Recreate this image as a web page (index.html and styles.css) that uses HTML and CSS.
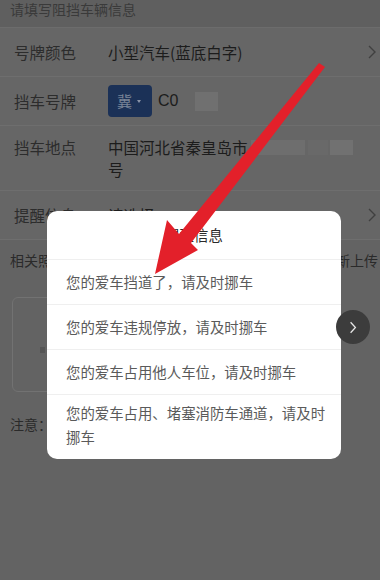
FILE: index.html
```html
<!DOCTYPE html>
<html lang="zh-CN">
<head>
<meta charset="utf-8">
<link rel="stylesheet" href="styles.css">
</head>
<body>
<div class="page">
  <div class="sec-head">请填写阻挡车辆信息</div>
  <div class="row">
    <span class="label">号牌颜色</span>
    <span class="value">小型汽车(蓝底白字)</span>
    <svg class="chev" viewBox="0 0 8 14" width="8" height="14"><path d="M1 1 L7 7 L1 13" fill="none" stroke="#404040" stroke-width="1.4"/></svg>
  </div>
  <div class="row">
    <span class="label">挡车号牌</span>
    <div class="value plate-line">
      <span class="plate">冀<i class="caret"></i></span>
      <span class="plate-no">C0</span>
      <span class="mask mask-a"></span>
    </div>
  </div>
  <div class="row row-tall">
    <span class="label">挡车地点</span>
    <div class="value addr">
      <div class="addr-line">中国河北省秦皇岛市<span class="mask mask-b"></span><span class="mask mask-c"></span><span class="mask mask-d"></span></div>
      <div>号</div>
    </div>
  </div>
  <div class="row">
    <span class="label">提醒信息</span>
    <span class="value">请选择</span>
    <svg class="chev" viewBox="0 0 8 14" width="8" height="14"><path d="M1 1 L7 7 L1 13" fill="none" stroke="#404040" stroke-width="1.4"/></svg>
  </div>
  <div class="photo-head"><span>相关照片</span><span>重新上传</span></div>
  <div class="photo-area">
    <div class="photo-box"><span class="plus"></span></div>
  </div>
  <div class="note">注意：</div>
</div>

<div class="modal">
  <div class="modal-title">提醒信息</div>
  <div class="opt">您的爱车挡道了，请及时挪车</div>
  <div class="opt">您的爱车违规停放，请及时挪车</div>
  <div class="opt">您的爱车占用他人车位，请及时挪车</div>
  <div class="opt opt-multi">您的爱车占用、堵塞消防车通道，请及时挪车</div>
</div>

<div class="next-btn">
  <svg viewBox="0 0 10 16" width="8" height="13"><path d="M2 1.5 L8 8 L2 14.5" fill="none" stroke="#e6e6e6" stroke-width="1.6"/></svg>
</div>

<svg class="arrow" viewBox="0 0 380 580" width="380" height="580">
  <polygon points="319,63 325,67 191,243 198,250 155,274 167,220 179,234" fill="#e3202a"/>
</svg>
</body>
</html>
```

FILE: styles.css
```css
html, body {
  margin: 0;
  padding: 0;
}
body {
  width: 380px;
  height: 580px;
  overflow: hidden;
  background: #636363;
  font-family: "Noto Sans CJK SC", "Noto Sans", sans-serif;
  position: relative;
}
.page {
  display: flex;
  flex-direction: column;
}
.sec-head {
  height: 27px;
  line-height: 18px;
  padding-left: 10px;
  font-size: 14px;
  color: #3a3a3a;
  background: #5f5f5f;
  border-bottom: 1px solid #6c6c6c;
}
.row {
  display: flex;
  align-items: center;
  height: 48px;
  padding: 0 2px 0 14px;
  background: #666666;
  border-bottom: 1px solid #6e6e6e;
  font-size: 15.5px;
}
.row-tall {
  align-items: flex-start;
  box-sizing: border-box;
  height: 65px;
  padding-top: 10px;
  padding-bottom: 10px;
}
.label {
  width: 94px;
  color: #2c2c2c;
  line-height: 22px;
}
.value {
  flex: 1;
  color: #1c1c1c;
  line-height: 22px;
}
.chev {
  flex: none;
  margin-right: 2px;
}
.plate-line {
  display: flex;
  align-items: center;
}
.plate {
  width: 44px;
  height: 32px;
  box-sizing: border-box;
  border-radius: 4px;
  background: #1b3157;
  color: #7a8598;
  font-size: 15px;
  display: flex;
  align-items: center;
  padding-left: 9px;
  gap: 5px;
}
.caret {
  width: 0;
  height: 0;
  border-left: 2.5px solid transparent;
  border-right: 2.5px solid transparent;
  border-top: 3px solid #8a94a8;
}
.plate-no {
  margin-left: 6px;
  color: #1c1c1c;
  font-family: "Liberation Sans", sans-serif;
  font-size: 16px;
}
.mask {
  display: inline-block;
  background: #707070;
}
.mask-a {
  width: 23px;
  height: 19px;
  margin-left: 17px;
}
.addr-line {
  display: flex;
  align-items: center;
}
.mask-b {
  width: 54px;
  height: 15px;
  margin-left: 3px;
  background: #6e6e6e;
}
.mask-c {
  width: 20px;
  height: 15px;
  margin-left: 3px;
  background: #696969;
}
.mask-d {
  width: 23px;
  height: 15px;
  margin-left: 2px;
  background: #717171;
}
.photo-head {
  display: flex;
  justify-content: space-between;
  height: 40px;
  line-height: 40px;
  padding: 0 2px 0 10px;
  font-size: 14px;
  color: #2a2a2a;
}
.photo-area {
  display: flex;
  padding: 17px 0 0 12px;
  height: 96px;
}
.photo-box {
  width: 100px;
  height: 95px;
  box-sizing: border-box;
  border: 1px solid #727272;
  border-radius: 6px;
  position: relative;
}
.plus {
  position: absolute;
  left: 27px;
  top: 49px;
  width: 5px;
  height: 6px;
  background: #555;
}
.note {
  margin-top: 21px;
  padding-left: 10px;
  font-size: 14px;
  line-height: 20px;
  color: #2a2a2a;
}
.modal {
  position: absolute;
  left: 47px;
  top: 211px;
  width: 294px;
  background: #ffffff;
  border-radius: 10px;
  overflow: hidden;
}
.modal-title {
  height: 48px;
  line-height: 48px;
  text-align: center;
  font-size: 14.4px;
  color: #2a2a2a;
  border-bottom: 1px solid #efefef;
}
.opt {
  padding: 10px 14px 10px 19px;
  line-height: 24px;
  font-size: 14.4px;
  color: #5a5a5a;
  border-bottom: 1px solid #efefef;
}
.opt-multi {
  padding-top: 6px;
  padding-bottom: 10px;
  border-bottom: none;
}
.next-btn {
  position: absolute;
  left: 336px;
  top: 310px;
  width: 34px;
  height: 34px;
  border-radius: 50%;
  background: #3c3c3c;
  display: flex;
  align-items: center;
  justify-content: center;
}
.arrow {
  position: absolute;
  left: 0;
  top: 0;
  pointer-events: none;
}
```
